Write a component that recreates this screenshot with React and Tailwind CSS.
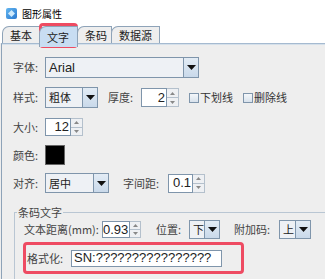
const font = "font-['Noto_Sans_CJK_SC','Noto_Sans',sans-serif]";

function Arrow({ className = "" }) {
  return (
    <svg width="9" height="5" viewBox="0 0 9 5" className={className}>
      <path d="M0 0H9L4.5 5Z" fill="#111" />
    </svg>
  );
}

function Combo({ w, text, latin }) {
  return (
    <div
      className={`flex h-full border border-[#7f95ab] bg-[#eef1f5]`}
      style={{ width: w }}
    >
      <div
        className={`flex-1 flex items-center pl-[3px] text-[#222] whitespace-nowrap ${
          latin ? "font-['Liberation_Sans',sans-serif] text-[13px]" : "text-[11px]"
        }`}
      >
        {text}
      </div>
      <div className="w-[15px] border-l border-[#7f95ab] bg-gradient-to-b from-[#e3ecf5] to-[#c9d9ea] flex items-center justify-center">
        <Arrow />
      </div>
    </div>
  );
}

function Spinner({ w, value }) {
  return (
    <div className="flex h-full" style={{ width: w }}>
      <div className="flex-1 bg-white border border-[#7f95ab] flex items-center justify-end pr-[1px] text-[13px] text-[#222] font-['Liberation_Sans',sans-serif]">
        {value}
      </div>
      <div className="w-[12px] flex flex-col border border-l-0 border-[#b4c0cc] bg-[#eef0f3]">
        <div className="flex-1 flex items-center justify-center border-b border-[#b4c0cc]">
          <svg width="5" height="3" viewBox="0 0 5 3">
            <path d="M0 3H5L2.5 0Z" fill="#888" />
          </svg>
        </div>
        <div className="flex-1 flex items-center justify-center">
          <svg width="5" height="3" viewBox="0 0 5 3">
            <path d="M0 0H5L2.5 3Z" fill="#888" />
          </svg>
        </div>
      </div>
    </div>
  );
}

function Check({ label }) {
  return (
    <div className="flex items-center h-full">
      <div className="w-[10px] h-[10px] border border-[#7f95ab] bg-gradient-to-b from-[#f4f7fa] to-[#d8e2ec]" />
      <span className="ml-[1px] text-[11px] text-[#333] whitespace-nowrap">{label}</span>
    </div>
  );
}

function Label({ w, children }) {
  return (
    <div className="shrink-0 text-[11px] text-[#444] whitespace-nowrap" style={{ width: w }}>
      {children}
    </div>
  );
}

function Tab({ children, active, w }) {
  return (
    <div
      className={`flex items-center pl-[7px] border border-b-0 border-[#8ea3b8] rounded-tl-[7px] -ml-px text-[11px] text-[#222] ${
        active ? "bg-[#c8ddf2] h-[21px] self-start -mb-[3px] relative z-10" : "bg-[#eeeeee] h-[17px]"
      }`}
      style={{ width: w }}
    >
      {children}
    </div>
  );
}

export default function App() {
  return (
    <div className={`w-[325px] h-[279px] overflow-hidden bg-[#eeeeee] relative ${font}`}>
      {/* title */}
      <div className="h-[26px] bg-white flex items-center pl-[6px] gap-[5px]">
        <div className="w-[11px] h-[11px] rounded-[2px] bg-gradient-to-br from-[#63b6f0] to-[#2a78cf] flex items-center justify-center">
          <div className="w-[5px] h-[5px] rotate-45 bg-[#cfeafc]" />
        </div>
        <span className="text-[10px] text-black">图形属性</span>
      </div>

      {/* tabs */}
      <div className="bg-white h-[17px] flex items-end pl-[3px]">
        <Tab w={38}>基本</Tab>
        <div className="self-end h-[17px] flex items-start">
          <Tab active w={39}>文字</Tab>
        </div>
        <Tab w={35}>条码</Tab>
        <Tab w={49}>数据源</Tab>
      </div>

      {/* panel */}
      <div className="border-t border-[#a5bad0] border-l border-l-[#8ea3b8] ml-[1px]">
        <div className="border-t border-[#d5e0ea] h-[2px]" />
        <div className="pl-[11px] pt-[11px] flex flex-col">
          <div className="flex items-center h-[21px]">
            <Label w={32}>字体:</Label>
            <Combo w={154} text="Arial" latin />
          </div>

          <div className="flex items-center h-[21px] mt-[9px]">
            <Label w={32}>样式:</Label>
            <Combo w={53} text="粗体" />
            <div className="ml-[10px]"><Label w={33}>厚度:</Label></div>
            <div className="h-[19px]"><Spinner w={38} value="2" /></div>
            <div className="ml-[10px] h-full"><Check label="下划线" /></div>
            <div className="ml-[10px] h-full"><Check label="删除线" /></div>
          </div>

          <div className="flex items-center h-[18px] mt-[10px]">
            <Label w={32}>大小:</Label>
            <Spinner w={38} value="12" />
          </div>

          <div className="flex items-center h-[20px] mt-[9px]">
            <Label w={32}>颜色:</Label>
            <div className="w-[20px] h-[20px] bg-black border border-[#666]" />
          </div>

          <div className="flex items-center h-[20px] mt-[8px]">
            <Label w={32}>对齐:</Label>
            <Combo w={64} text="居中" />
            <div className="ml-[14px]"><Label w={45}>字间距:</Label></div>
            <div className="h-[19px]"><Spinner w={37} value="0.1" /></div>
          </div>

          <fieldset className="mt-[11px] ml-[1px] w-[340px] border border-[#b9c6d3] pl-[8px] pb-[20px]">
            <legend className="px-[1px] -ml-[6px] text-[11px] text-[#444] leading-[16px]">条码文字</legend>
            <div className="flex items-center h-[17px] mt-[1px] pl-[1px]">
              <Label w={78}>文本距离(mm):</Label>
              <Spinner w={39} value="0.93" />
              <div className="ml-[15px]"><Label w={33}>位置:</Label></div>
              <div className="h-[19px]"><Combo w={31} text="下" /></div>
              <div className="ml-[14px]"><Label w={45}>附加码:</Label></div>
              <div className="h-[19px]"><Combo w={32} text="上" /></div>
            </div>
            <div className="mt-[4px] w-[221px] h-[32px] border-[3px] border-[#ee4b62] rounded-[4px] flex items-center pl-[1px]">
              <Label w={44}>格式化:</Label>
              <div className="w-[151px] h-[17px] bg-white border border-[#7f95ab] flex items-center pl-[2px] text-[13px] text-[#222] font-['Liberation_Sans',sans-serif]">
                SN:????????????????
              </div>
            </div>
          </fieldset>
        </div>
      </div>

      {/* highlight on the selected tab */}
      <div className="absolute left-[39px] top-[23px] w-[39px] h-[25px] border-[3px] border-[#ee4b62] rounded-[4px] pointer-events-none" />
    </div>
  );
}
